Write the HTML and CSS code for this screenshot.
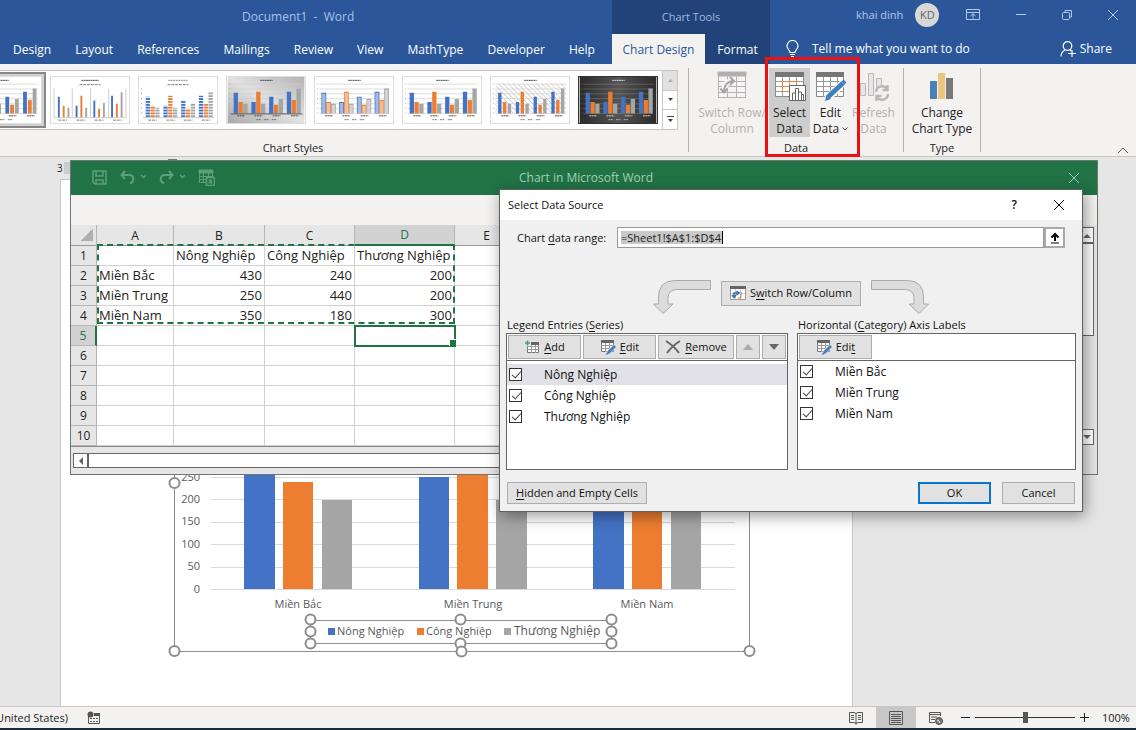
FILE: index.html
```html
<!DOCTYPE html>
<html lang="en">
<head>
<meta charset="utf-8">
<title>Document1 - Word</title>
<link rel="stylesheet" href="styles.css">
</head>
<body>
<svg class="defs" aria-hidden="true">
  <defs>
    <linearGradient id="dark-fill" x1="0" x2="1" y1="0" y2="0"><stop offset="0" stop-color="#2b2b2b"/><stop offset=".5" stop-color="#555"/><stop offset="1" stop-color="#2b2b2b"/></linearGradient>
    <linearGradient id="gray-fill" x1="0" x2="1" y1="1" y2="0"><stop offset="0" stop-color="#a8a8a8"/><stop offset=".5" stop-color="#e2e2e2"/><stop offset="1" stop-color="#b4b4b4"/></linearGradient>
    <pattern id="stripes" width="4" height="3" patternUnits="userSpaceOnUse"><path d="M0 .5h4" stroke="#fff"/></pattern>
    <pattern id="hatch" width="5" height="5" patternUnits="userSpaceOnUse"><path d="M0 0l5 5" stroke="#aaa" stroke-width=".7"/></pattern>
  </defs>
  <symbol id="bars" viewBox="0 0 80 48">
    <path stroke="#4472c4" d="M8.500 38V16.500M27 38V26M45.500 38V20.500M64 38V15.500"/>
    <path stroke="#ed7d31" d="M13.500 38V26M32 38V15.500M50.500 38V29M69 38V24"/>
    <path stroke="#a5a5a5" d="M18.500 38V28M37 38V28M55.500 38V23M74 38V12"/>
  </symbol>
  <symbol id="bars-inner" viewBox="0 0 80 48">
    <path stroke="#fff" d="M8.500 38V17.500M27 38V27M45.500 38V21.500M64 38V16.500M13.500 38V27M32 38V16.500M50.500 38V30M69 38V25M18.500 38V29M37 38V29M55.500 38V24M74 38V13"/>
  </symbol>
  <symbol id="grid" viewBox="0 0 80 48">
    <path stroke="#ccc" stroke-width=".7" d="M4 7.500h73M4 12.500h73M4 17.500h73M4 22.500h73M4 28h73M4 33h73M4 38h73"/>
    <path stroke="#aaa" stroke-dasharray="1 4" d="M2 7v32"/>
  </symbol>
  <symbol id="marks" viewBox="0 0 80 48">
    <path stroke="currentColor" stroke-width="1" stroke-dasharray="2 .4" d="M34 3.500h13"/>
    <path stroke="currentColor" stroke-width="1" stroke-dasharray="2 .5" d="M10 40.500h8M28 40.500h8M47 40.500h8M66 40.500h8"/>
    <path stroke="currentColor" stroke-width="1" opacity=".7" stroke-dasharray="2 .5" d="M30 44.500h5M38 44.500h5M46 44.500h5"/>
  </symbol>
  <symbol id="table-pen" viewBox="0 0 16 16">
    <path fill="#fff" stroke="#777" d="M1.500 2.500h12v10h-12z"/><path stroke="#999" fill="none" d="M1 6.500h13M1 9.500h13M5.500 4v9M9.500 4v9"/><path fill="#666" d="M1 1h13v3H1z"/>
    <path stroke="#eee" stroke-width="4" d="M7 15l8-8"/><path stroke="#3f7fc0" stroke-width="3" d="M8 14l7-7"/><path fill="#3f7fc0" d="M6 16l1-3 2 2z"/>
  </symbol>
</svg>

<header class="topbar">
  <div class="top-main">
    <div class="doc-title">Document1&nbsp; -&nbsp; Word</div>
    <nav class="tabs">
      <button>Design</button><button>Layout</button><button>References</button><button>Mailings</button><button>Review</button><button>View</button><button>MathType</button><button>Developer</button><button>Help</button>
    </nav>
  </div>
  <div class="top-context">
    <div class="context-title">Chart Tools</div>
    <nav class="context-tabs"><button class="active">Chart Design</button><button>Format</button></nav>
  </div>
  <div class="top-right">
    <div class="account">
      <span>khai dinh</span><span class="avatar">KD</span>
      <div class="window-buttons">
        <button aria-label="Ribbon display options"><svg width="14" height="12" viewBox="0 0 14 12" fill="none" stroke="currentColor"><path d="M.5.500h13v10H.500zM.500 3.500h13M7 9.500V5M4.500 7L7 4.800 9.500 7"/></svg></button>
        <button aria-label="Minimize"><svg width="12" height="12" viewBox="0 0 12 12" stroke="currentColor"><path d="M1 5.500h10"/></svg></button>
        <button aria-label="Restore"><svg width="12" height="12" viewBox="0 0 12 12" fill="none" stroke="currentColor"><rect x="1.500" y="3.500" width="7" height="7" rx="1"/><path d="M4 3V1.500h6.500V8H9"/></svg></button>
        <button aria-label="Close"><svg width="12" height="12" viewBox="0 0 12 12" stroke="currentColor"><path d="M1 1l10 10M11 1L1 11"/></svg></button>
      </div>
    </div>
    <div class="assist">
      <button class="tell"><svg width="13" height="18" viewBox="0 0 13 18" fill="none" stroke="currentColor" stroke-width="1.200"><path d="M4 12.500C4 10 1 9 1 6a5.500 5.500 0 0 1 11 0c0 3-3 4-3 6.500zM4 14.500h5M5 16.500h3"/></svg>Tell me what you want to do</button>
      <button class="share"><svg width="16" height="16" viewBox="0 0 16 16" fill="none" stroke="currentColor" stroke-width="1.200"><circle cx="7.500" cy="5" r="4.300"/><path d="M1 15.500c0-4 2-5.500 4-6.500M10 9l1 1M8 12.500h8M12 9v7"/></svg>Share</button>
    </div>
  </div>
</header>

<section class="ribbon">
  <div class="group styles-group">
    <div class="gallery">
      <div class="thumbs">
        <button class="thumb selected" aria-label="Style 1"><svg viewBox="0 0 80 48"><use href="#grid"/><use href="#bars" stroke-width="4"/><use href="#marks"/></svg></button>
        <button class="thumb" aria-label="Style 2"><svg viewBox="0 0 80 48"><path stroke="#ccc" d="M2.500 12v30M21.500 12v30M40.500 12v30M59.500 12v30M77.500 12v30M2 42.500h76"/><g transform="translate(-1 4)"><use href="#bars" width="80" height="48" stroke-width="2"/></g><path stroke="#444" stroke-dasharray="2 .4" d="M31 3.500h18"/><path stroke="#777" stroke-dasharray="3 1" d="M29 8h22M7 45h9M26 45h9M45 45h9M64 45h9"/></svg></button>
        <button class="thumb" aria-label="Style 3"><svg viewBox="0 0 80 48"><g transform="translate(0 4)"><use href="#bars" width="80" height="48" stroke-width="4.500"/></g><path fill="url(#stripes)" d="M5 10h73v32H5z"/><path stroke="#ccc" d="M3 42.500h75"/><path stroke="#888" stroke-dasharray="1 4" d="M2 12v30"/><path stroke="#888" stroke-dasharray="2 .6" d="M30 3.500h20"/><path stroke="#777" stroke-dasharray="3 1" d="M29 8h22M9 45h9M28 45h9M46 45h9M65 45h9"/></svg></button>
        <button class="thumb" aria-label="Style 4"><svg viewBox="0 0 80 48"><path fill="url(#gray-fill)" d="M0 0h80v48H0z"/><use href="#grid"/><use href="#bars" stroke-width="4.500"/><path stroke="#555" d="M3 38.500h75"/><use href="#marks"/></svg></button>
        <button class="thumb" aria-label="Style 5"><svg viewBox="0 0 80 48"><use href="#grid"/><use href="#bars" stroke-width="5"/><use href="#bars-inner" stroke-width="3.500" opacity=".5"/><use href="#marks"/></svg></button>
        <button class="thumb" aria-label="Style 6"><svg viewBox="0 0 80 48"><use href="#grid"/><use href="#bars" stroke-width="4.500"/><use href="#marks"/></svg></button>
        <button class="thumb" aria-label="Style 7"><svg viewBox="0 0 80 48"><path fill="url(#hatch)" d="M4 7h74v31H4z"/><use href="#grid"/><use href="#bars" stroke-width="3.500"/><use href="#marks"/></svg></button>
        <button class="thumb dark" aria-label="Style 8"><svg viewBox="0 0 80 48"><path fill="url(#dark-fill)" d="M0 0h80v48H0z"/><g opacity=".35"><use href="#grid"/></g><use href="#bars" stroke-width="4.500"/><use href="#marks"/></svg></button>
      </div>
      <div class="gallery-scroll">
        <button class="off" aria-label="Previous styles"><svg width="7" height="4" viewBox="0 0 7 4"><path fill="#aaa" d="M1 4h5L3.500 1z"/></svg></button>
        <button aria-label="Next styles"><svg width="7" height="4" viewBox="0 0 7 4"><path fill="#444" d="M1 0h5L3.500 3z"/></svg></button>
        <button aria-label="More styles"><svg width="7" height="7" viewBox="0 0 7 7"><path fill="#444" d="M0 0h7v1H0zM1 3h5L3.500 6z"/></svg></button>
      </div>
    </div>
    <div class="group-label">Chart Styles</div>
  </div>
  <div class="group data-group">
    <div class="commands">
      <button class="cmd wide muted" disabled><svg width="30" height="28" viewBox="0 0 30 28" fill="none" stroke="#b5b2b2"><path fill="#f5f3f5" d="M1.500 1.500h27v25h-27z"/><path d="M1 10.500h28M1 15.500h28M1 21.500h28M10.500 5v22M19.500 5v22"/><path fill="#b0adad" d="M1 1h28v4H1z"/><path stroke="#f5f3f5" stroke-width="6" d="M7 20c0-7 4-10 10-10"/><path stroke="#a8a5a5" stroke-width="2" d="M7 21c0-7 4-11 10-11M13 6l4 4-4 4M3.500 17.500L7 21.500l3.500-4"/></svg><span>Switch Row/<br>Column</span></button>
      <button class="cmd pressed"><svg width="32" height="30" viewBox="0 0 32 30" fill="none"><path fill="#fff" stroke="#888" d="M1.500 2.500h28v23h-28z"/><path stroke="#999" d="M1 10.500h28M1 15.500h28M1 20.500h28M8.500 6v20M15.500 6v20M22.500 6v20"/><path stroke="#dd8849" d="M8.500 10.500h14v10h-14zM15.500 10v10M8 15.500h14"/><path fill="#777" d="M1 1h29v5H1z"/><path fill="#fff" stroke="#666" d="M15.500 14.500h16v15h-16zM18.500 29v-7h3v7M21.500 29V17.500h3V29M24.500 21h3v8M27.500 23.500h2V29"/></svg><span>Select<br>Data</span></button>
      <button class="cmd"><svg width="32" height="30" viewBox="0 0 32 30" fill="none"><path fill="#fff" stroke="#888" d="M1.500 2.500h27v23h-27z"/><path stroke="#999" d="M1 10.500h28M1 15.500h28M1 20.500h28M8.500 6v20M15.500 6v20M22.500 6v20"/><path fill="#777" d="M1 1h28v5H1z"/><path stroke="#fff" stroke-width="7" d="M12 28l17-17"/><path stroke="#3f7fc0" stroke-width="5" d="M13 26l15-14"/><path fill="#3f7fc0" d="M10 30l1.500-6 4.500 4z"/><path stroke="#3f7fc0" stroke-width="4" d="M28 12l2-2"/></svg><span>Edit<br>Data <svg width="6" height="4" viewBox="0 0 6 4" fill="none" stroke="#444"><path d="M.5.500L3 3 5.500.500"/></svg></span></button>
      <button class="cmd refresh muted" disabled><svg width="32" height="30" viewBox="0 0 32 30" fill="none" stroke="#bbb8b8"><path fill="#e8e5e8" d="M2.500 12.500h5v12h-5zM10.500 2.500h5v22h-5zM18.500 7.500h5v10h-5z"/><circle cx="24" cy="22" r="8" fill="#f3f2f1" stroke="none"/><path stroke-width="2.500" d="M18 21a6 6 0 0 1 11-3M30 23a6 6 0 0 1-11 3M29.500 14v5h-5M18.500 30v-5h5"/></svg><span>Refresh<br>Data</span></button>
    </div>
    <div class="group-label">Data</div>
    <div class="callout"></div>
  </div>
  <div class="group type-group">
    <button class="cmd"><svg width="26" height="30" viewBox="0 0 26 30"><path fill="#4a80b8" d="M1 10h7v18H1z"/><path fill="#ecc67c" d="M9 2h7v26H9z"/><path fill="#7a7878" d="M17 7h7v21h-7z"/></svg><span>Change<br>Chart Type</span></button>
    <div class="group-label">Type</div>
  </div>
  <button class="collapse" aria-label="Collapse ribbon"><svg width="12" height="7" viewBox="0 0 12 7" fill="none" stroke="#555"><path d="M1 6l5-5 5 5"/></svg></button>
</section>

<main class="workspace">
  <div class="ruler"><span>3</span><i></i><b></b></div>
  <div class="page">
    <svg class="chart" width="590" height="350" viewBox="167 308 590 350" role="img" aria-label="Column chart by region">
      <path class="frame" d="M174.500 315.500h575v336h-575z"/>
      <path class="gridlines" d="M211 477.500h524M211 499.500h524M211 522.500h524M211 544.500h524M211 567.500h524"/>
      <path fill="#4472c4" d="M244 397h31v192h-31zM419 477h30v112h-30zM593 432h31v157h-31z"/>
      <path fill="#ed7d31" d="M283 482h30v107h-30zM457 392h31v197h-31zM632 508h30v81h-30z"/>
      <path fill="#a5a5a5" d="M322 500h30v89h-30zM496 500h31v89h-31zM671 455h30v134h-30z"/>
      <path class="gridlines" d="M211 589.500h524"/>
      <g class="axis"><text x="200" y="481">250</text><text x="200" y="503">200</text><text x="200" y="525">150</text><text x="200" y="548">100</text><text x="200" y="570">50</text><text x="200" y="593">0</text></g>
      <g class="category"><text x="298" y="608">Miền Bắc</text><text x="473" y="608">Miền Trung</text><text x="647" y="608">Miền Nam</text></g>
      <path class="frame" d="M310.500 620.500h301v23h-301z"/>
      <path fill="#4472c4" d="M328 628h7v7h-7z"/><path fill="#ed7d31" d="M417 628h7v7h-7z"/><path fill="#a5a5a5" d="M504 628h7v7h-7z"/>
      <g class="legend"><text x="337" y="635">Nông Nghiệp</text><text x="426" y="635">Công Nghiệp</text><text class="large" x="514" y="635">Thương Nghiệp</text></g>
      <g class="handles"><circle cx="174.500" cy="483" r="5"/><circle cx="174.500" cy="651" r="5"/><circle cx="749.500" cy="651" r="5"/><circle cx="310.500" cy="619.500" r="5"/><circle cx="310.500" cy="631.500" r="5"/><circle cx="310.500" cy="643.500" r="5"/><circle cx="460.500" cy="619.500" r="5"/><circle cx="460.500" cy="643.500" r="5"/><circle cx="461.500" cy="651.500" r="5"/><circle cx="611.500" cy="619.500" r="5"/><circle cx="611.500" cy="631.500" r="5"/><circle cx="611.500" cy="643.500" r="5"/></g>
    </svg>
  </div>

  <section class="excel">
    <header class="excel-title">
      <div class="quick">
        <svg width="15" height="15" viewBox="0 0 15 15" fill="none" stroke="currentColor" stroke-width="1.500"><path d="M1 1h13v13H3l-2-2zM4 1v5h7V1M4 14v-4h7v4"/></svg>
        <svg width="26" height="15" viewBox="0 0 26 15" fill="none" stroke="currentColor" stroke-width="2"><path d="M5 1L1.500 5 5 9M2 5h7c5 0 6 6 1 8.500"/><path stroke-width="1.500" d="M21 5l2.500 2.500L26 5"/></svg>
        <svg width="26" height="15" viewBox="0 0 26 15" fill="none" stroke="currentColor" stroke-width="2"><path d="M10 1l3.500 4L10 9M13 5H6C1 5 0 11 5 13.500"/><path stroke-width="1.500" d="M21 5l2.500 2.500L26 5"/></svg>
        <svg width="17" height="17" viewBox="0 0 17 17" fill="none" stroke="currentColor"><path d="M1.500 1.500h13v12h-13zM1 7.500h14M1 10.500h14M5.500 2v12M10.500 2v12"/><path fill="currentColor" d="M1 1h14v3H1z"/><path fill="#217346" stroke-width="1.500" d="M8.500 8.500h8v8h-8zM11 10.500l3 4M14 10.500l-3 4"/></svg>
      </div>
      <span class="excel-name">Chart in Microsoft Word</span>
      <button class="excel-close" aria-label="Close chart data"><svg width="12" height="12" viewBox="0 0 12 12" stroke="currentColor"><path d="M1 1l10 10M11 1L1 11"/></svg></button>
    </header>
    <div class="excel-band"></div>
    <div class="excel-body">
      <div class="sheet">
        <table>
          <colgroup><col class="c-num"><col class="c-a"><col class="c-b"><col class="c-c"><col class="c-d"><col class="c-e"><col></colgroup>
          <thead><tr><th class="corner"></th><th>A</th><th>B</th><th>C</th><th class="current">D</th><th>E</th><th></th></tr></thead>
          <tbody>
            <tr><th>1</th><td></td><td>Nông Nghiệp</td><td>Công Nghiệp</td><td>Thương Nghiệp</td><td></td><td></td></tr>
            <tr><th>2</th><td>Miền Bắc</td><td class="n">430</td><td class="n">240</td><td class="n">200</td><td></td><td></td></tr>
            <tr><th>3</th><td>Miền Trung</td><td class="n">250</td><td class="n">440</td><td class="n">200</td><td></td><td></td></tr>
            <tr><th>4</th><td>Miền Nam</td><td class="n">350</td><td class="n">180</td><td class="n">300</td><td></td><td></td></tr>
            <tr><th class="current">5</th><td></td><td></td><td></td><td class="cursor"></td><td></td><td></td></tr>
            <tr><th>6</th><td></td><td></td><td></td><td></td><td></td><td></td></tr>
            <tr><th>7</th><td></td><td></td><td></td><td></td><td></td><td></td></tr>
            <tr><th>8</th><td></td><td></td><td></td><td></td><td></td><td></td></tr>
            <tr><th>9</th><td></td><td></td><td></td><td></td><td></td><td></td></tr>
            <tr><th>10</th><td></td><td></td><td></td><td></td><td></td><td></td></tr>
          </tbody>
        </table>
        <div class="range"></div>
      </div>
      <div class="vscroll">
        <button aria-label="Scroll up"><svg width="8" height="5" viewBox="0 0 8 5"><path fill="#666" d="M0 5h8L4 1z"/></svg></button>
        <div class="vthumb"></div>
        <button class="down" aria-label="Scroll down"><svg width="8" height="5" viewBox="0 0 8 5"><path fill="#666" d="M0 0h8L4 4z"/></svg></button>
      </div>
    </div>
    <div class="hscroll"><button aria-label="Scroll left"><svg width="5" height="8" viewBox="0 0 5 8"><path fill="#666" d="M5 0v8L1 4z"/></svg></button><div class="hthumb"></div></div>
  </section>

  <section class="dialog" role="dialog" aria-label="Select Data Source">
    <header class="dialog-title"><span>Select Data Source</span><button aria-label="Help">?</button><button aria-label="Close"><svg width="12" height="12" viewBox="0 0 12 12" stroke="#000"><path d="M1 1l10 10M11 1L1 11"/></svg></button></header>
    <div class="dialog-body">
      <div class="range-row">
        <label for="data-range">Chart <u>d</u>ata range:</label>
        <input id="data-range" type="text" value="=Sheet1!$A$1:$D$4">
        <button aria-label="Collapse dialog"><svg width="10" height="12" viewBox="0 0 10 12" fill="none" stroke="#000"><path stroke-width="2" d="M5 9V2M1.500 5.500L5 2l3.500 3.500"/><path d="M1 11h8"/></svg></button>
      </div>
      <div class="switch-row">
        <svg width="58" height="36" viewBox="0 0 58 36"><path fill="#dcdcdc" stroke="#aaa" d="M57.500 1.500v9H24q-9 0-9 9V25h5L10 34.500.500 25h5v-7q0-16 16-16.500z"/></svg>
        <button class="btn switch"><svg width="16" height="16" viewBox="0 0 16 16" fill="none"><path fill="#fff" stroke="#999" d="M.5 2.500h15v12H.500z"/><path fill="#666" d="M0 1h16v3H0z"/><path stroke="#ccc" d="M1 8.500h14M5.500 4v10M10.500 4v10"/><path stroke="#2f74b5" stroke-width="1.500" d="M4 12V8h4M6.500 6L9 8 6.500 10M2 10l2 2.500L6 10"/><path stroke="#dd7b33" d="M11 7v6H8"/></svg><span>S<u>w</u>itch Row/Column</span></button>
        <svg width="58" height="36" viewBox="0 0 58 36"><path fill="#dcdcdc" stroke="#aaa" d="M.5 1.500v9H34q9 0 9 9V25h-5l10 9.500L57.500 25h-5v-7q0-16-16-16.500z"/></svg>
      </div>
      <div class="lists">
        <div class="list-col series">
          <div class="list-name">Legend Entries (<u>S</u>eries)</div>
          <div class="list-box">
            <div class="toolbar">
              <button class="btn"><svg width="16" height="16" viewBox="0 0 16 16" fill="none"><path fill="#fff" stroke="#777" d="M3.500 4.500h11v9h-11z"/><path stroke="#999" d="M3 7.500h12M3 10.500h12M7.500 5v9M11.500 5v9"/><path fill="#666" d="M7 3h8v3H7z"/><path stroke="#e1e1e1" stroke-width="4" d="M0 4h7M3.500 0v7"/><path stroke="#4f9b77" stroke-width="1.500" d="M1 4h5M3.500 1.500v5"/></svg><span><u>A</u>dd</span></button>
              <button class="btn"><svg width="16" height="16"><use href="#table-pen"/></svg><span><u>E</u>dit</span></button>
              <button class="btn remove"><svg width="16" height="16" viewBox="0 0 16 16" fill="none" stroke="#666" stroke-width="2"><path d="M1 2q8 5 13 12M15 2Q7 7 2 14"/></svg><span><u>R</u>emove</span></button>
              <button class="btn arrow" aria-label="Move up" disabled><svg width="10" height="6" viewBox="0 0 10 6"><path fill="#aaa" d="M0 6h10L5 0z"/></svg></button>
              <button class="btn arrow" aria-label="Move down"><svg width="10" height="6" viewBox="0 0 10 6"><path fill="#666" d="M0 0h10L5 6z"/></svg></button>
            </div>
            <div class="items">
              <label class="chosen"><input type="checkbox" checked>Nông Nghiệp</label>
              <label><input type="checkbox" checked>Công Nghiệp</label>
              <label><input type="checkbox" checked>Thương Nghiệp</label>
            </div>
          </div>
        </div>
        <div class="list-col labels">
          <div class="list-name">Horizontal (<u>C</u>ategory) Axis Labels</div>
          <div class="list-box">
            <div class="toolbar"><button class="btn"><svg width="16" height="16"><use href="#table-pen"/></svg><span>Edi<u>t</u></span></button></div>
            <div class="items">
              <label><input type="checkbox" checked>Miền Bắc</label>
              <label><input type="checkbox" checked>Miền Trung</label>
              <label><input type="checkbox" checked>Miền Nam</label>
            </div>
          </div>
        </div>
      </div>
      <footer class="dialog-foot">
        <button class="btn hidden-cells"><span><u>H</u>idden and Empty Cells</span></button>
        <button class="btn ok">OK</button><button class="btn">Cancel</button>
      </footer>
    </div>
  </section>
</main>

<footer class="status">
  <span class="lang">United States)</span>
  <svg width="14" height="14" viewBox="0 0 14 14" fill="none" stroke="#555"><path d="M1.500 5v7.500h11V3"/><path stroke-dasharray="2 1" d="M3 7.500h9M3 10.500h9"/><path fill="#555" stroke="none" d="M7 2h6v3H7z"/><circle cx="3.500" cy="3.500" r="3" fill="#555" stroke="none"/></svg>
  <div class="views">
    <button aria-label="Read mode"><svg width="14" height="14" viewBox="0 0 14 14" fill="none" stroke="#555"><path d="M7 2.500v11M.5 1.500H5l2 1 2-1h4.500v10H9l-2 1-2-1H.500zM2 4.500h3M2 6.500h3M2 8.500h3M9 4.500h3M9 6.500h3M9 8.500h3"/></svg></button>
    <button class="on" aria-label="Print layout"><svg width="14" height="14" viewBox="0 0 14 14" fill="none" stroke="#555"><path d="M.5.500h13v13H.500zM2 3.500h10M2 5.500h10M2 7.500h10M2 9.500h10M2 11.500h10"/></svg></button>
    <button aria-label="Web layout"><svg width="14" height="14" viewBox="0 0 14 14" fill="none" stroke="#555"><path d="M6 11.500H.500V1.500h11V5M.500 3.500h11M2 6h6M2 8.500h4"/><circle cx="10" cy="10" r="3.500" fill="#777"/><path stroke="#eee" d="M8 9l2 1 1 2"/></svg></button>
  </div>
  <button class="zoom-btn" aria-label="Zoom out"><svg width="9" height="9" viewBox="0 0 9 9" stroke="#222"><path d="M0 4.500h9"/></svg></button>
  <input class="zoom" type="range" min="0" max="100" value="50" aria-label="Zoom">
  <button class="zoom-btn" aria-label="Zoom in"><svg width="9" height="9" viewBox="0 0 9 9" stroke="#222"><path d="M0 4.500h9M4.500 0v9"/></svg></button>
  <span class="percent">100%</span>
</footer>
</body>
</html>
```
FILE: styles.css
```css
* { box-sizing: border-box; }
html, body { height: 100%; margin: 0; }
body { display: flex; flex-direction: column; overflow: hidden; font: 12px/16px "Open Sans", "Noto Sans", sans-serif; color: #222; background: #e6e6e6; border-bottom: 2px solid #1c2b3a; }
button { font: inherit; color: inherit; background: none; border: 0; padding: 0; margin: 0; white-space: nowrap; }
svg { display: block; flex: none; }
.defs { position: absolute; width: 0; height: 0; }

/* title bar and tabs */
.topbar { display: flex; height: 64px; flex: none; background: #2b579a; color: #fff; }
.top-main { width: 612px; display: flex; flex-direction: column; }
.doc-title { height: 34px; line-height: 34px; padding-left: 242px; color: #a9c1e6; }
.tabs { flex: 1; display: flex; justify-content: space-between; padding: 2px 17px 0 13px; }
.top-context { width: 158px; background: #224379; display: flex; flex-direction: column; }
.context-title { height: 34px; line-height: 33px; text-align: center; font-size: 11px; color: #9fb9df; }
.context-tabs { flex: 1; display: flex; }
.context-tabs button { flex: 1; padding-top: 2px; }
.context-tabs .active { flex: none; width: 93px; background: #f3f2f1; color: #2b579a; }
.top-right { flex: 1; display: flex; flex-direction: column; }
.account { height: 34px; display: flex; align-items: center; padding: 0 17px 4px 86px; font-size: 11px; color: #b4c8e8; }
.avatar { width: 24px; height: 24px; margin-left: 12px; border-radius: 50%; background: #d8d8d8; color: #666; line-height: 24px; text-align: center; }
.window-buttons { flex: 1; display: flex; justify-content: space-between; padding-left: 27px; }
.assist { flex: 1; display: flex; justify-content: space-between; padding: 0 24px 0 16px; }
.tell, .share { display: flex; align-items: center; }
.tell { gap: 13px; }
.share { gap: 4px; }

/* ribbon */
.ribbon { height: 93px; flex: none; display: flex; background: #f3f2f1; border-bottom: 1px solid #c8c6c4; padding-top: 4px; }
.group { height: 84px; display: flex; flex-direction: column; border-right: 1px solid #b5b3b1; position: relative; }
.group-label { margin-top: auto; height: 14px; line-height: 20px; font-size: 11px; text-align: center; }
.styles-group { width: 689px; padding-top: 2px; }
.styles-group .group-label { padding-right: 102px; }
.gallery { display: flex; height: 60px; margin-right: 10px; background: #fff; border: 1px solid #c6c6c6; border-left: 0; }
.thumbs { flex: 1; display: flex; justify-content: flex-end; align-items: center; overflow: hidden; }
.thumb { flex: none; width: 88px; height: 56px; padding: 4px; color: #444; }
.thumb svg { width: 80px; height: 48px; border: 1px solid #ddd; background: #fff; }
.thumb.selected { background: #d0d0d0; border: 2px solid #888; padding: 2px; }
.thumb.dark { color: #ddd; }
.thumb.dark svg { border-color: #333; }
.gallery-scroll { width: 15px; display: flex; flex-direction: column; border-left: 1px solid #c6c6c6; }
.gallery-scroll button { flex: 1; display: flex; align-items: center; justify-content: center; }
.gallery-scroll button + button { border-top: 1px solid #c6c6c6; }
.gallery-scroll .off { background: #e1e1e1; }
.data-group { width: 215px; }
.commands { display: flex; padding-left: 6px; }
.cmd { width: 41px; height: 69px; display: flex; flex-direction: column; align-items: center; padding-top: 3px; }
.cmd svg { margin-bottom: 4px; }
.cmd span { width: max-content; }
.cmd span svg { display: inline-block; margin: 0 0 2px; }
.cmd.wide { width: 74px; }
.cmd.wide svg { margin-bottom: 6px; }
.cmd.refresh { width: 45px; }
.cmd.pressed { background: #cdcdcd; }
.muted { color: #b3b0ad; }
.callout { position: absolute; left: 76px; top: -11px; width: 95px; height: 100px; border: 3px solid #ee1111; z-index: 6; }
.type-group { width: 77px; align-items: center; }
.type-group .cmd { width: 76px; }
.collapse { margin: auto 7px 2px auto; }

/* document */
.workspace { position: relative; flex: 1; min-height: 0; overflow: hidden; }
.ruler { display: flex; align-items: center; height: 22px; padding-left: 57px; font-size: 10px; }
.ruler i { width: 8px; height: 12px; margin-left: 1px; background: #ccc; }
.ruler b { width: 9px; height: 1px; margin: 2px 0 0 96px; align-self: flex-start; background: #777; }
.page { width: calc(100% - 343px); height: 100%; margin-left: 60px; padding: 128px 0 0 106px; background: #fff; border: 1px solid #c8c8c8; }
.chart { max-width: none; }
.frame { fill: none; stroke: #8c8c8c; }
.gridlines { fill: none; stroke: #d9d9d9; }
.chart text { font-size: 11px; fill: #595959; }
.chart .large { font-size: 12px; }
.axis { text-anchor: end; }
.category { text-anchor: middle; }
.handles { fill: #fff; stroke: #8c8c8c; stroke-width: 2; }

/* embedded sheet window */
.excel { position: absolute; left: 70px; right: 38px; top: 3px; border: 1px solid #6f7572; background: #e6e6e6; }
.excel-title { display: flex; align-items: center; justify-content: space-between; height: 34px; padding: 0 17px 1px 21px; background: #217346; color: #a3d0b5; }
.quick { display: flex; align-items: center; gap: 13px; color: #5c9f79; width: 200px; }
.excel-close { width: 200px; display: flex; justify-content: flex-end; }
.excel-band { height: 30px; background: #f3f2f1; }
.excel-body { display: flex; }
.sheet { flex: 1; position: relative; border-bottom: 1px solid #8a8a8a; background: #fff; }
.sheet table { width: 100%; table-layout: fixed; border-collapse: separate; border-spacing: 0; font-size: 13px; line-height: 19px; color: #222; }
.c-num { width: 26px; } .c-a { width: 77px; } .c-b { width: 91px; } .c-c { width: 90px; } .c-d { width: 100px; } .c-e { width: 64px; }
.sheet th, .sheet td { height: 20px; padding: 0 2px; border-right: 1px solid #d0d0d0; border-bottom: 1px solid #d0d0d0; font-weight: 400; white-space: nowrap; overflow: hidden; }
.sheet th { background: #e6e6e6; font-size: 12px; text-align: center; border-color: #b5b5b5; }
.sheet thead th { border-bottom-color: #999; }
.sheet th.corner { background: linear-gradient(135deg, #e6e6e6 50%, #b0b0b0 50%) 9px 4px / 13px 12px no-repeat #e6e6e6; }
.sheet th.current { background: #d2d2d2; color: #217346; }
.sheet thead .current { border-bottom: 2px solid #217346; }
.sheet tbody .current { border-right: 2px solid #217346; }
.sheet .n { text-align: right; }
.sheet td.cursor { outline: 2px solid #217346; outline-offset: -1px; }
.range { position: absolute; left: 26px; top: 19px; width: 358px; height: 80px; border: 2px dashed #217346; }
.range::after { content: ""; position: absolute; right: -3px; bottom: -24px; width: 6px; height: 6px; background: #217346; border: 1px solid #fff; border-width: 1px 0 0 1px; }
.vscroll { width: 17px; margin: 2px 3px 2px 0; padding-left: 2px; display: flex; flex-direction: column; }
.vscroll button { height: 16px; border: 1px solid #666; background: #fff; display: flex; align-items: center; justify-content: center; }
.vthumb { height: 93px; border: 1px solid #666; background: #fff; }
.vscroll .down { margin-top: auto; }
.hscroll { display: flex; height: 15px; margin: 6px 20px 6px 2px; border: 1px solid #666; background: #fff; }
.hscroll button { width: 15px; display: flex; align-items: center; justify-content: center; border-right: 2px solid #666; }

/* dialog */
.dialog { position: absolute; left: 499px; right: 53px; top: 32px; border: 1px solid #5f5f5f; background: #f0f0f0; font-size: 11px; color: #111; box-shadow: 2px 4px 14px rgba(0,0,0,.4); z-index: 5; }
.dialog-title { display: flex; align-items: center; height: 30px; padding: 0 17px 0 8px; background: #fff; }
.dialog-title span { flex: 1; }
.dialog-title button + button { margin-left: 36px; }
.dialog-title button { font-size: 12px; font-weight: 600; }
.dialog-body { padding: 7px 6px; }
u { text-underline-offset: 2px; }
.range-row { display: flex; align-items: center; padding: 0 11px; }
.range-row label { width: 100px; flex: none; }
.range-row input { flex: 1; min-width: 0; height: 21px; border: 1px solid #999; padding: 0 3px; font: inherit; color: #222; background: linear-gradient(#c8c8c8, #c8c8c8) 3px 3px / 101px 13px no-repeat, linear-gradient(#000, #000) 104px 3px / 1px 13px no-repeat #fff; }
.range-row button { width: 21px; height: 21px; border: 2px solid #aaa; background: #fff; display: flex; align-items: center; justify-content: center; }
.switch-row { display: flex; justify-content: center; align-items: center; gap: 10px; padding-top: 31px; }
.btn { height: 23px; min-width: 73px; padding: 0; border: 1px solid #adadad; background: #e1e1e1; display: flex; align-items: center; justify-content: center; gap: 4px; }
.btn.switch { width: 140px; height: 25px; margin-top: -8px; }
.lists { display: flex; gap: 9px; }
.list-col { flex: 1 1 279px; }
.list-col.series { flex-basis: 282px; }
.list-name { height: 18px; line-height: 20px; padding-left: 1px; }
.list-box { border: 1px solid #646464; background: #fff; height: 137px; }
.toolbar { display: flex; gap: 2px; padding: 1px; border-bottom: 1px solid #646464; }
.toolbar .btn { height: 24px; }
.toolbar .remove { min-width: 76px; }
.toolbar .arrow { min-width: 24px; }
.items { display: flex; flex-direction: column; font-size: 12px; }
.series .items { padding-top: 3px; }
.items label { display: flex; align-items: center; height: 21px; padding-left: 2px; }
.chosen { background: #e0e0e6; }
.items input { appearance: none; position: relative; width: 13px; height: 13px; margin: 0 22px 0 0; border: 1px solid #333; background: #fff; }
.items input::after { content: ""; position: absolute; left: 2px; top: 2px; width: 8px; height: 4px; border: solid #444; border-width: 0 0 1px 1px; transform: rotate(-48deg); }
.dialog-foot { display: flex; gap: 11px; padding: 12px 1px 0; }
.dialog-foot .btn { height: 22px; }
.dialog-foot .hidden-cells { width: 140px; margin-right: auto; }
.dialog-foot .ok { border: 2px solid #0a74cc; }

/* status bar */
.status { flex: none; height: 22px; display: flex; align-items: center; background: #f3f2f1; border-top: 1px solid #c8c6c4; padding-right: 8px; font-size: 11px; }
.lang { width: 68px; display: flex; justify-content: flex-end; white-space: nowrap; }
.lang + svg { margin-left: 19px; }
.views { display: flex; align-self: stretch; margin-left: auto; }
.views button { width: 40px; display: flex; align-items: center; justify-content: center; }
.views .on { background: #c8c8c8; }
.zoom-btn { margin: 0 5px; }
.zoom { appearance: none; width: 100px; height: 14px; margin: 0; background: linear-gradient(#333, #333) center / 100% 1px no-repeat; }
.zoom::-webkit-slider-thumb { appearance: none; width: 5px; height: 11px; background: #555; }
.percent { width: 26px; margin-left: 8px; white-space: nowrap; }
```
